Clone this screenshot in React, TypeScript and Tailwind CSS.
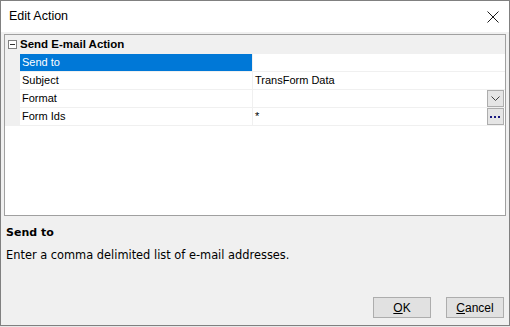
import { FC } from 'react';

const rows = [
  { name: 'Send to', value: '', selected: true },
  { name: 'Subject', value: 'TransForm Data' },
  { name: 'Format', value: '', editor: 'dropdown' },
  { name: 'Form Ids', value: '*', editor: 'ellipsis' },
];

const GridRow: FC<{ name: string; value: string; selected?: boolean; editor?: string }> = ({
  name,
  value,
  selected,
  editor,
}) => (
  <div className="flex h-[18px] border-b border-[#f0f0f0]">
    <div className="w-[15px] shrink-0 bg-[#f0f0f0]" />
    <div
      className={`w-[233px] shrink-0 pl-[2px] flex items-center border-r border-[#f0f0f0] ${
        selected ? 'bg-[#0078d7] text-white' : 'text-black'
      }`}
    >
      {name}
    </div>
    <div className="flex-1 flex items-center pl-[2px] relative">
      <span>{value}</span>
      {editor === 'dropdown' && (
        <div className="absolute right-[1px] top-0 w-[17px] h-[17px] border border-[#adadad] bg-[#e5e5e5] flex items-center justify-center">
          <svg width="9" height="5" viewBox="0 0 9 5">
            <path d="M0.5 0.5 L4.5 4.5 L8.5 0.5" stroke="#404040" fill="none" strokeWidth="1" />
          </svg>
        </div>
      )}
      {editor === 'ellipsis' && (
        <div className="absolute right-[1px] top-0 w-[17px] h-[17px] border border-[#adadad] bg-[#e5e5e5] flex items-center justify-center">
          <svg width="11" height="3" viewBox="0 0 11 3">
            <rect x="0" y="1" width="2" height="2" fill="#1a1a80" />
            <rect x="4" y="1" width="2" height="2" fill="#1a1a80" />
            <rect x="8" y="1" width="2" height="2" fill="#1a1a80" />
          </svg>
        </div>
      )}
    </div>
  </div>
);

export default function App() {
  return (
    <div className="w-[510px] h-[327px] bg-[#e8e8e8]">
      <div
        className="w-[510px] h-[326px] bg-[#f0f0f0] border border-[#808080] flex flex-col"
        style={{ fontFamily: '"Liberation Sans", Arial, sans-serif' }}
      >
        {/* title bar */}
        <div className="h-[31px] bg-white flex items-center justify-between pl-[8px] pr-[10px] shrink-0">
          <span className="text-[12.5px] text-black">Edit Action</span>
          <svg width="12" height="12" viewBox="0 0 12 12">
            <path d="M0.5 0.5 L11.5 11.5 M11.5 0.5 L0.5 11.5" stroke="#1a1a1a" strokeWidth="1" />
          </svg>
        </div>

        {/* property grid */}
        <div className="px-[3px] pt-[2px]">
          <div className="h-[182px] border border-[#a0a0a0] bg-white text-[11px] leading-none">
            <div className="h-[19px] bg-[#f0f0f0] flex items-center">
              <div className="w-[15px] flex justify-center">
                <div className="w-[9px] h-[9px] border border-[#808080] bg-white flex items-center justify-center">
                  <div className="w-[5px] h-px bg-[#303030]" />
                </div>
              </div>
              <span className="font-bold text-[11.5px] text-black">Send E-mail Action</span>
            </div>
            {rows.map((r) => (
              <GridRow key={r.name} {...r} />
            ))}
          </div>
        </div>

        {/* description */}
        <div
          className="px-[5px] pt-[10px] text-black"
          style={{ fontFamily: '"DejaVu Sans", Tahoma, sans-serif' }}
        >
          <div className="font-bold text-[11px] leading-[14px]">Send to</div>
          <div className="text-[11.4px] leading-[14px] mt-[8px]">Enter a comma delimited list of e-mail addresses.</div>
        </div>

        {/* buttons */}
        <div className="mt-auto flex justify-end gap-[15px] pr-[5px] pb-[7px] text-[12px]">
          <button className="w-[58px] h-[21px] border border-[#adadad] bg-[#e1e1e1] text-black">
            <u>O</u>K
          </button>
          <button className="w-[58px] h-[21px] border border-[#adadad] bg-[#e1e1e1] text-black">
            <u>C</u>ancel
          </button>
        </div>
      </div>
    </div>
  );
}
